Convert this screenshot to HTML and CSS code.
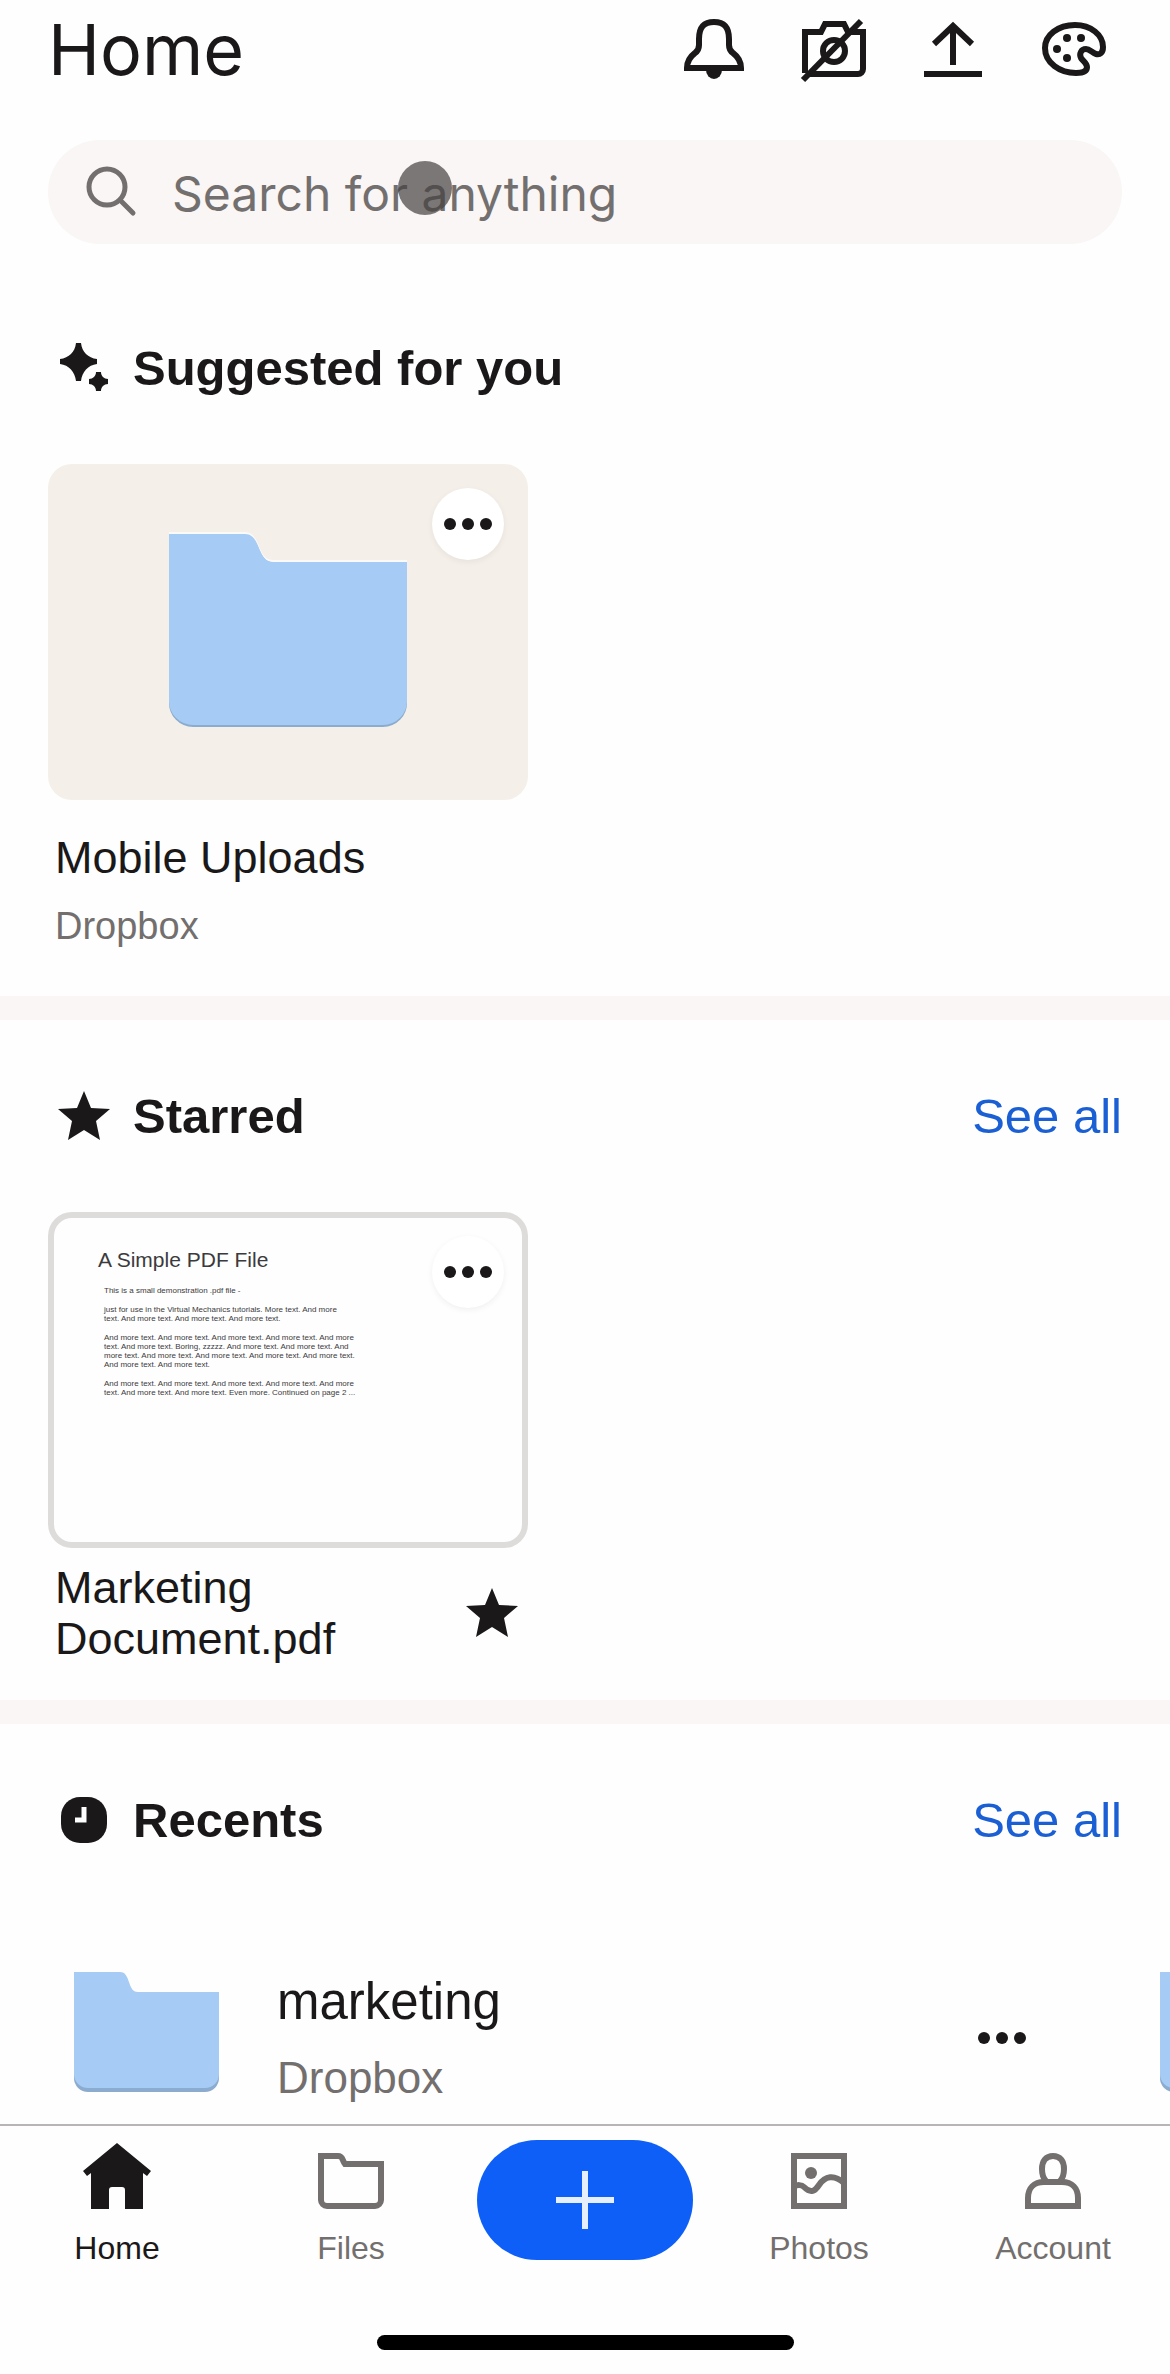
FILE: index.html
```html
<!DOCTYPE html>
<html lang="en">
<head>
    <meta charset="UTF-8">
    <meta name="viewport" content="width=device-width, initial-scale=1.0">
    <title>Home - Dropbox</title>
    <link rel="stylesheet" href="styles.css">
</head>
<body>
    <header class="header">
        <h1>Home</h1>
        <div class="header-actions">
            <button class="icon-btn" aria-label="Notifications">
                <svg class="icon" viewBox="0 0 72 72">
                    <path class="line" d="M9 55C9 47 13 43 17 40C20 38 21 36 21 32V26C21 14 26 9 36 9C46 9 51 14 51 26V32C51 36 52 38 55 40C59 43 63 47 63 55Z"/>
                    <path d="M28 57a8 9 0 0 0 16 0z"/>
                </svg>
            </button>
            <button class="icon-btn" aria-label="Camera uploads off">
                <svg class="icon" viewBox="0 0 72 72">
                    <path class="line" d="M7 60V19H23L27 11H46L50 19H65V56a5 5 0 0 1-5 5H10"/>
                    <circle class="line" cx="36" cy="38" r="11"/>
                    <path class="line" d="M5 67L63 8"/>
                </svg>
            </button>
            <button class="icon-btn" aria-label="Upload">
                <svg class="icon" viewBox="0 0 72 72">
                    <path class="line" d="M16 31L35 13L54 31M35 13V52M6 61H64"/>
                </svg>
            </button>
            <button class="icon-btn" aria-label="Theme">
                <svg class="icon" viewBox="0 0 72 72">
                    <path class="line" d="M37 12C53 12 65 22 65 34C65 40 62 42 58 41C54 40 52 36 48 36C43 36 41 41 43 45C45 48 49 50 49 54C49 58 45 60 38 60C22 60 7 50 7 35C7 22 20 12 37 12Z"/>
                    <circle cx="29" cy="25" r="4"/>
                    <circle cx="43" cy="25" r="4"/>
                    <circle cx="19" cy="36" r="4"/>
                    <circle cx="29" cy="45" r="4"/>
                </svg>
            </button>
        </div>
    </header>

    <main>
        <div class="search">
            <label for="search" aria-label="Search">
                <svg class="search-icon" viewBox="0 0 48 48">
                    <circle cx="19" cy="19" r="18"/>
                    <path d="M32 32L45 45"/>
                </svg>
            </label>
            <input type="text" id="search" placeholder="Search for anything">
            <span class="touch"></span>
        </div>

        <section class="section">
            <div class="section-header">
                <svg class="section-icon" viewBox="0 0 52 52">
                    <path d="M18 1H23C24 10 30 16 39 17V22C30 23 24 30 23 39H18C17 30 11 23 2 22V17C11 16 17 10 18 1Z"/>
                    <path d="M38 30H43C43 34 46 37 50 37V42C46 42 43 45 43 49H38C38 45 35 42 31 42V37C35 37 38 34 38 30Z"/>
                </svg>
                <h2>Suggested for you</h2>
            </div>
            <div class="card">
                <div class="thumb thumb-folder">
                    <svg class="folder-large" viewBox="0 0 238 200">
                        <path class="folder-light" d="M0 0H76C92 0 88 28 104 28H238V40H0Z"/>
                        <path class="folder-shade" d="M0 4H76C92 4 88 30 104 30H238V170A24 24 0 0 1 214 195H24A24 24 0 0 1 0 170Z"/>
                        <path class="folder-front" d="M0 2H76C92 2 88 30 104 30H238V168A24 24 0 0 1 214 193H24A24 24 0 0 1 0 168Z"/>
                    </svg>
                    <button class="more more-round" aria-label="More options">
                        <svg class="dots" viewBox="0 0 48 12"><circle cx="6" cy="6" r="6"/><circle cx="24" cy="6" r="6"/><circle cx="42" cy="6" r="6"/></svg>
                    </button>
                </div>
                <div class="card-info">
                    <p class="card-name">Mobile Uploads</p>
                    <p class="card-place">Dropbox</p>
                </div>
            </div>
        </section>

        <section class="section">
            <div class="section-header">
                <svg class="section-icon" viewBox="0 0 52 52">
                    <path d="M26 1L33 18L52 19L38 31L42 50L26 40L10 50L14 31L0 19L19 18Z"/>
                </svg>
                <h2>Starred</h2>
                <a href="#starred">See all</a>
            </div>
            <div class="card">
                <div class="thumb thumb-doc">
                    <div class="doc">
                        <h3>A Simple PDF File</h3>
                        <p>This is a small demonstration .pdf file -</p>
                        <p>just for use in the Virtual Mechanics tutorials. More text. And more<br>
                        text. And more text. And more text. And more text.</p>
                        <p>And more text. And more text. And more text. And more text. And more<br>
                        text. And more text. Boring, zzzzz. And more text. And more text. And<br>
                        more text. And more text. And more text. And more text. And more text.<br>
                        And more text. And more text.</p>
                        <p>And more text. And more text. And more text. And more text. And more<br>
                        text. And more text. And more text. Even more. Continued on page 2 ...</p>
                    </div>
                    <button class="more more-round" aria-label="More options">
                        <svg class="dots" viewBox="0 0 48 12"><circle cx="6" cy="6" r="6"/><circle cx="24" cy="6" r="6"/><circle cx="42" cy="6" r="6"/></svg>
                    </button>
                </div>
                <div class="card-info card-info-starred">
                    <p class="card-name">Marketing Document.pdf</p>
                    <svg class="section-icon" viewBox="0 0 52 52">
                        <path d="M26 1L33 18L52 19L38 31L42 50L26 40L10 50L14 31L0 19L19 18Z"/>
                    </svg>
                </div>
            </div>
        </section>

        <section class="section">
            <div class="section-header">
                <svg class="section-icon" viewBox="0 0 52 52">
                    <rect x="3" y="3" width="46" height="46" rx="19"/>
                    <path class="clock-hands" d="M26 13V26H17"/>
                </svg>
                <h2>Recents</h2>
                <a href="#recents">See all</a>
            </div>
            <div class="recents">
                <div class="recent">
                    <svg class="folder-small" viewBox="0 0 145 120">
                        <path class="folder-shade" d="M0 30H145V106A14 14 0 0 1 131 120H14A14 14 0 0 1 0 106Z"/>
                        <path class="folder-front" d="M0 0H46C57 0 53 20 64 20H145V102A14 14 0 0 1 131 116H14A14 14 0 0 1 0 102Z"/>
                    </svg>
                    <div class="recent-info">
                        <p class="recent-name">marketing</p>
                        <p class="recent-place">Dropbox</p>
                    </div>
                    <button class="more" aria-label="More options">
                        <svg class="dots" viewBox="0 0 48 12"><circle cx="6" cy="6" r="6"/><circle cx="24" cy="6" r="6"/><circle cx="42" cy="6" r="6"/></svg>
                    </button>
                </div>
                <div class="recent">
                    <svg class="folder-small" viewBox="0 0 145 120">
                        <path class="folder-shade" d="M0 30H145V106A14 14 0 0 1 131 120H14A14 14 0 0 1 0 106Z"/>
                        <path class="folder-front" d="M0 0H46C57 0 53 20 64 20H145V102A14 14 0 0 1 131 116H14A14 14 0 0 1 0 102Z"/>
                    </svg>
                </div>
            </div>
        </section>
    </main>

    <footer class="bottom">
        <nav class="tabs">
            <a href="#home" class="tab active">
                <svg class="icon" viewBox="0 0 72 72">
                    <path d="M36 3L70 31L66 36L62 33V69H44V50a3 3 0 0 0-3-3H31a3 3 0 0 0-3 3V69H10V33L6 36L2 31Z"/>
                </svg>
                <span>Home</span>
            </a>
            <a href="#files" class="tab">
                <svg class="icon" viewBox="0 0 72 72">
                    <path class="line" d="M6 16H23C28 16 27 20 30 24H66V60a6 6 0 0 1-6 6H12a6 6 0 0 1-6-6Z"/>
                </svg>
                <span>Files</span>
            </a>
            <button class="add-btn" aria-label="Add">
                <svg class="plus" viewBox="0 0 58 58"><path d="M29 0V58M0 29H58"/></svg>
            </button>
            <a href="#photos" class="tab">
                <svg class="icon" viewBox="0 0 72 72">
                    <path class="line" d="M11 16H61V66H11Z"/>
                    <path class="line" d="M11 47C14 44 19 45 21 47C28 54 32 51 36 45C42 36 51 34 61 43"/>
                    <circle cx="28" cy="33" r="6"/>
                </svg>
                <span>Photos</span>
            </a>
            <a href="#account" class="tab">
                <svg class="icon" viewBox="0 0 72 72">
                    <path class="line" d="M11 66V58C11 48 17 42 27 42H45C55 42 61 48 61 58V66Z"/>
                    <path class="line" d="M29 41C26 38 25 33 25 29C25 21 29 16 36 16C43 16 47 21 47 29C47 33 46 38 43 41"/>
                </svg>
                <span>Account</span>
            </a>
        </nav>
        <div class="home-indicator"></div>
    </footer>
</body>
</html>
```
FILE: styles.css
```css
* {
    box-sizing: border-box;
}
body {
    margin: 0;
    min-height: 100vh;
    display: flex;
    flex-direction: column;
    font-family: "Liberation Sans", Arial, sans-serif;
    background: #fefefe;
    color: #1a1818;
}
h1, h2, h3, p {
    margin: 0;
}
a {
    text-decoration: none;
}
button {
    display: flex;
    align-items: center;
    justify-content: center;
    padding: 0;
    border: none;
    background: none;
    color: #1a1818;
    cursor: pointer;
}
svg {
    display: block;
    flex: none;
    fill: currentColor;
}
main {
    flex: 1;
}

/* Header */
.header {
    display: flex;
    align-items: center;
    justify-content: space-between;
    height: 98px;
    padding: 0 60px 0 48px;
}
.header h1 {
    font-family: Inter, "Liberation Sans", sans-serif;
    font-size: 70px;
    font-weight: 400;
}
.header-actions {
    display: flex;
    gap: 48px;
}
.icon {
    width: 72px;
    height: 72px;
}
.line {
    fill: none;
    stroke: currentColor;
    stroke-width: 6;
}

/* Search */
.search {
    position: relative;
    display: flex;
    align-items: center;
    gap: 36px;
    height: 104px;
    margin: 42px 48px 28px;
    padding: 0 40px;
    border-radius: 52px;
    background: #f9f6f5;
    color: #736f6e;
}
.search input {
    flex: 1;
    min-width: 0;
    padding: 2px 0 0;
    border: none;
    outline: none;
    background: none;
    font-family: Inter, "Liberation Sans", sans-serif;
    font-size: 48px;
    color: #1a1818;
}
.search input::placeholder {
    color: #736f6e;
    opacity: 1;
}
.search-icon {
    width: 48px;
    height: 48px;
    overflow: visible;
    fill: none;
    stroke: currentColor;
    stroke-width: 5;
    stroke-linecap: round;
}
.touch {
    position: absolute;
    left: 350px;
    top: 21px;
    width: 54px;
    height: 54px;
    border-radius: 50%;
    background: rgba(70, 66, 66, 0.7);
}

/* Sections */
.section {
    padding-top: 60px;
}
.section + .section {
    border-top: 24px solid #f9f6f5;
}
.section-header {
    display: flex;
    align-items: center;
    gap: 23px;
    height: 72px;
    padding-left: 10px;
    margin: 0 48px 60px;
}
.section-header h2 {
    flex: 1;
    font-size: 49px;
}
.section-header a {
    font-size: 49px;
    color: #1a5fd4;
}
.section-icon {
    width: 52px;
    height: 52px;
}
.clock-hands {
    fill: none;
    stroke: #fefefe;
    stroke-width: 5;
}

/* Cards */
.card {
    width: 480px;
    margin-left: 48px;
}
.thumb {
    position: relative;
    display: flex;
    height: 336px;
    border-radius: 24px;
}
.thumb-folder {
    align-items: center;
    justify-content: center;
    background: #f4efe8;
}
.thumb-doc {
    box-shadow: inset 0 0 0 6px #dedcdb;
}
.folder-large {
    width: 238px;
    height: 200px;
}
.folder-front {
    fill: #a6cbf5;
}
.folder-shade {
    fill: #8caccf;
}
.folder-light {
    fill: #fafaf8;
}
.more {
    width: 72px;
    height: 72px;
}
.more-round {
    position: absolute;
    top: 24px;
    right: 24px;
    border-radius: 50%;
    background: #fff;
    box-shadow: 0 2px 6px rgba(0, 0, 0, 0.06);
}
.dots {
    width: 48px;
    height: 12px;
}
.doc {
    padding: 36px 0 0 56px;
    font-size: 8px;
    line-height: 9px;
    color: #3c3a3c;
    white-space: nowrap;
}
.doc h3 {
    margin: 0 0 14px -6px;
    font-size: 21px;
    font-weight: normal;
    line-height: 24px;
}
.doc p {
    margin-bottom: 10px;
}
.card-info {
    padding: 32px 10px 48px 7px;
}
.card-name {
    font-size: 45px;
    line-height: 51px;
}
.card-place {
    margin-top: 21px;
    font-size: 38px;
    line-height: 44px;
    color: #736f6e;
}
.card-info-starred {
    display: flex;
    align-items: center;
    justify-content: space-between;
    gap: 60px;
    padding-top: 14px;
    padding-bottom: 36px;
}

/* Recents */
.recents {
    display: flex;
    gap: 12px;
    padding: 56px 48px 0;
    overflow: hidden;
}
.section-header + .recents {
    margin-top: 0;
}
.recent {
    flex: none;
    display: flex;
    align-items: center;
    width: 100%;
    padding-left: 26px;
    padding-right: 84px;
}
.folder-small {
    align-self: flex-start;
    width: 145px;
    height: 120px;
}
.recent-info {
    flex: 1;
    padding-left: 58px;
}
.recent-name {
    font-size: 51px;
    line-height: 60px;
}
.recent-place {
    margin-top: 20px;
    font-size: 44px;
    line-height: 52px;
    color: #736f6e;
}

/* Bottom bar */
.bottom {
    border-top: 2px solid #b8b5b4;
    padding: 14px 0 24px;
}
.tabs {
    display: grid;
    grid-template-columns: repeat(5, 1fr);
    justify-items: center;
    align-items: start;
}
.tab {
    display: flex;
    flex-direction: column;
    align-items: center;
    gap: 16px;
    font-size: 32px;
    line-height: 40px;
    color: #736f6e;
}
.tab.active {
    color: #1a1818;
}
.add-btn {
    width: 216px;
    height: 120px;
    border-radius: 60px;
    background: #0d5ff8;
}
.plus {
    width: 58px;
    height: 58px;
    stroke: #e8effc;
    stroke-width: 6;
}
.home-indicator {
    width: 417px;
    height: 15px;
    margin: 67px auto 0;
    border-radius: 8px;
    background: #000;
}
```
